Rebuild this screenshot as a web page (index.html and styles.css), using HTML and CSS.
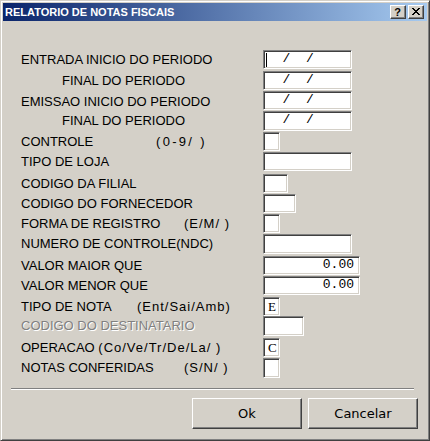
FILE: index.html
```html
<!DOCTYPE html>
<html lang="pt">
<head>
<meta charset="utf-8">
<title>RELATORIO DE NOTAS FISCAIS</title>
<link rel="stylesheet" href="styles.css">
</head>
<body>
<div class="window">
  <div class="titlebar">
    <span class="title">RELATORIO DE NOTAS FISCAIS</span>
    <div class="caps">
      <span class="capbtn help">?</span>
      <span class="capbtn"><svg width="8" height="7" viewBox="0 0 8 7" shape-rendering="crispEdges"><path d="M0 0h2v1h-2z M6 0h2v1h-2z M1 1h2v1h-2z M5 1h2v1h-2z M2 2h4v1h-4z M3 3h2v1h-2z M2 4h4v1h-4z M1 5h2v1h-2z M5 5h2v1h-2z M0 6h2v1h-2z M6 6h2v1h-2z" fill="#000"/></svg></span>
    </div>
  </div>

  <div class="form">
    <div class="lbl">ENTRADA INICIO DO PERIODO</div>
    <div class="field w89 caretbox"><span class="caret"></span>  /  /</div>

    <div class="lbl ind">FINAL DO PERIODO</div>
    <div class="field w89">  /  /</div>

    <div class="lbl low">EMISSAO INICIO DO PERIODO</div>
    <div class="field w89">  /  /</div>

    <div class="lbl ind">FINAL DO PERIODO</div>
    <div class="field w89 h20">  /  /</div>

    <div class="lbl"><span class="main m135">CONTROLE</span><span class="hint wide">(0-9/ )</span></div>
    <div class="field w17"></div>

    <div class="lbl">TIPO DE LOJA</div>
    <div class="field w89"></div>

    <div class="lbl">CODIGO DA FILIAL</div>
    <div class="field w25"></div>

    <div class="lbl">CODIGO DO FORNECEDOR</div>
    <div class="field w33"></div>

    <div class="lbl"><span class="main m163">FORMA DE REGISTRO</span><span class="hint">(E/M/ )</span></div>
    <div class="field w17"></div>

    <div class="lbl">NUMERO DE CONTROLE(NDC)</div>
    <div class="field w89 h20"></div>

    <div class="lbl">VALOR MAIOR QUE</div>
    <div class="field w97 num">0.00</div>

    <div class="lbl">VALOR MENOR QUE</div>
    <div class="field w97 num">0.00</div>

    <div class="lbl"><span class="main m116">TIPO DE NOTA</span><span class="hint">(Ent/Sai/Amb)</span></div>
    <div class="field w17 ch">E</div>

    <div class="lbl disabled">CODIGO DO DESTINATARIO</div>
    <div class="field w41 h20"></div>

    <div class="lbl">OPERACAO <span class="hint">(Co/Ve/Tr/De/La/ )</span></div>
    <div class="field w17 ch">C</div>

    <div class="lbl"><span class="main m163">NOTAS CONFERIDAS</span><span class="hint">(S/N/ )</span></div>
    <div class="field w17 h20"></div>
  </div>

  <div class="sep"></div>

  <div class="buttons">
    <button class="btn">Ok</button>
    <button class="btn">Cancelar</button>
  </div>
</div>
</body>
</html>
```
FILE: styles.css
```css
html, body {
  margin: 0;
  padding: 0;
  background: #D4D0C8;
}

.window {
  width: 430px;
  height: 441px;
  box-sizing: border-box;
  background: #D4D0C8;
  border: 1px solid;
  border-color: #D4D0C8 #404040 #404040 #D4D0C8;
  box-shadow: inset 1px 1px #FFFFFF, inset -1px -1px #808080;
  padding: 2px;
  font-family: "Liberation Sans", Arial, sans-serif;
  font-size: 13px;
  color: #000;
}

.titlebar {
  height: 18px;
  display: flex;
  align-items: center;
  background: linear-gradient(to right, #0A246A, #A6CAF0);
  padding: 0 3px 0 2px;
}

.title {
  font-family: "Liberation Sans", Arial, sans-serif;
  font-weight: bold;
  font-size: 11px;
  color: #FFFFFF;
  white-space: nowrap;
}

.caps {
  margin-left: auto;
  display: flex;
  gap: 2px;
}

.capbtn {
  width: 16px;
  height: 14px;
  box-sizing: border-box;
  background: #D4D0C8;
  border: 1px solid;
  border-color: #FFFFFF #404040 #404040 #FFFFFF;
  box-shadow: inset -1px -1px #808080;
  display: flex;
  align-items: center;
  justify-content: center;
}

.capbtn svg {
  display: block;
  margin: 0 1px 1px 0;
}

.help {
  font-family: "Liberation Sans", Arial, sans-serif;
  font-weight: bold;
  font-size: 11px;
  line-height: 12px;
  padding-right: 1px;
}

.form {
  display: grid;
  grid-template-columns: 242px auto;
  grid-template-rows: 21px 20px 20px 21px 20px 22px 20px 20px 20px 22px 20px 21px 19px 22px 20px 20px;
  align-items: start;
  padding: 29px 0 0 18px;
}

.lbl {
  line-height: 19px;
  height: 19px;
  white-space: nowrap;
}

.lbl.low {
  line-height: 21px;
}

.lbl.ind {
  padding-left: 41px;
}

.lbl .main {
  display: inline-block;
}

.hint {
  letter-spacing: 1px;
  white-space: pre;
}

.hint.wide {
  letter-spacing: 2.3px;
}

.m135 { width: 135px; }
.m163 { width: 163px; }
.m116 { width: 116px; }

.lbl.disabled {
  color: #808080;
  text-shadow: 1px 1px #FFFFFF;
}

.field {
  position: relative;
  box-sizing: border-box;
  height: 19px;
  background: #FFFFFF;
  border: 1px solid;
  border-color: #808080 #FFFFFF #FFFFFF #808080;
  box-shadow: inset 1px 1px #404040, inset -1px -1px #D4D0C8;
  font-family: "Liberation Mono", "Courier New", monospace;
  font-size: 13px;
  line-height: 16px;
  padding: 0 2px 0 3px;
  white-space: pre;
  overflow: hidden;
}

.field.h20 { height: 20px; }

.w17 { width: 17px; }
.w25 { width: 25px; }
.w33 { width: 33px; }
.w41 { width: 41px; }
.w89 { width: 89px; }
.w97 { width: 97px; }

.field.num {
  text-align: right;
  padding-right: 5px;
}

.field.ch {
  font-family: "Liberation Serif", "Times New Roman", serif;
  font-size: 13px;
  line-height: 17px;
  padding-left: 4px;
}

.caret {
  position: absolute;
  left: 2px;
  top: 2px;
  width: 1px;
  height: 14px;
  background: #000;
}

.sep {
  margin: 10px 13px 0 8px;
  border-top: 1px solid #808080;
  border-bottom: 1px solid #FFFFFF;
}

.buttons {
  display: flex;
  justify-content: flex-end;
  gap: 6px;
  margin-top: 8px;
  padding-right: 9px;
}

.btn {
  width: 110px;
  height: 31px;
  box-sizing: border-box;
  background: #D4D0C8;
  border: 1px solid;
  border-color: #FFFFFF #404040 #404040 #FFFFFF;
  box-shadow: inset -1px -1px #808080;
  font-family: "DejaVu Sans", Verdana, sans-serif;
  font-size: 13px;
  color: #000;
  padding: 0;
  margin: 0;
}
```
